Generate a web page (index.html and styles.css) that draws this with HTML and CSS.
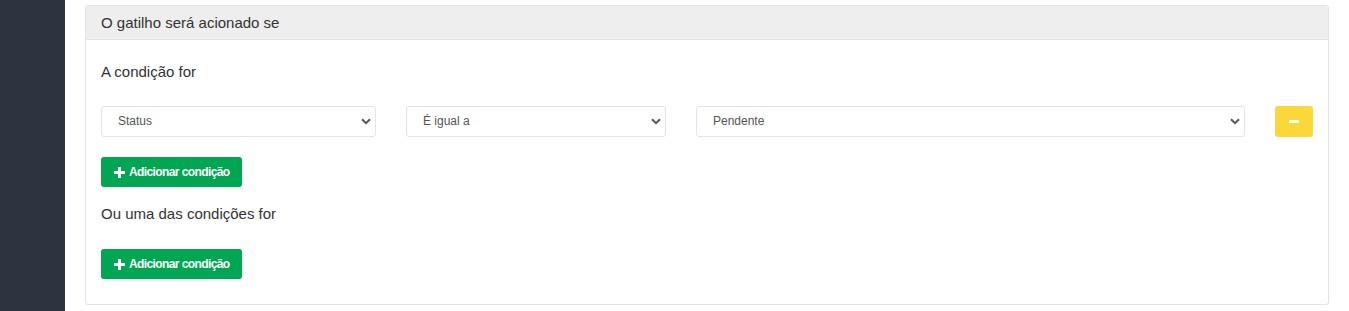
FILE: index.html
```html
<!DOCTYPE html>
<html lang="pt-BR">
<head>
<meta charset="utf-8">
<title>Gatilho</title>
<link rel="stylesheet" href="styles.css">
</head>
<body>
<div class="layout">
  <aside class="sidebar"></aside>
  <main class="main">
    <section class="card">
      <div class="card-header">O gatilho será acionado se</div>
      <div class="card-body">
        <div class="label label-first">A condição for</div>
        <div class="cond-row">
          <div class="select-wrap">
            <select class="select"><option>Status</option></select>
            <svg class="chev" width="10" height="7" viewBox="0 0 10 7"><path d="M1 1.2 L5 5.2 L9 1.2" fill="none" stroke="#555" stroke-width="2"/></svg>
          </div>
          <div class="select-wrap">
            <select class="select"><option>É igual a</option></select>
            <svg class="chev" width="10" height="7" viewBox="0 0 10 7"><path d="M1 1.2 L5 5.2 L9 1.2" fill="none" stroke="#555" stroke-width="2"/></svg>
          </div>
          <div class="select-wrap">
            <select class="select"><option>Pendente</option></select>
            <svg class="chev" width="10" height="7" viewBox="0 0 10 7"><path d="M1 1.2 L5 5.2 L9 1.2" fill="none" stroke="#555" stroke-width="2"/></svg>
          </div>
          <button class="btn-remove" type="button" aria-label="Remover"><span class="minus"></span></button>
        </div>
        <button class="btn-add btn-add-first" type="button">
          <svg class="plus" width="11" height="11" viewBox="0 0 11 11"><path d="M4 0h3v4h4v3H7v4H4V7H0V4h4z" fill="#fff"/></svg>
          <span>Adicionar condição</span>
        </button>
        <div class="label label-second">Ou uma das condições for</div>
        <button class="btn-add btn-add-second" type="button">
          <svg class="plus" width="11" height="11" viewBox="0 0 11 11"><path d="M4 0h3v4h4v3H7v4H4V7H0V4h4z" fill="#fff"/></svg>
          <span>Adicionar condição</span>
        </button>
      </div>
    </section>
  </main>
</div>
</body>
</html>
```
FILE: styles.css
```css
* { box-sizing: border-box; }
html, body { margin: 0; padding: 0; background: #fff; }
body {
  font-family: "Liberation Sans", Arial, sans-serif;
  font-size: 15px;
  color: #333;
}
.layout { display: flex; height: 311px; overflow: hidden; }
.sidebar { width: 65px; flex: none; background: #2d3440; }
.main { flex: 1; padding: 5px 21px 0 20px; }
.card {
  border: 1px solid #e3e3e3;
  border-radius: 3px;
  background: #fff;
}
.card-header {
  background: #eeeeee;
  border-bottom: 1px solid #e3e3e3;
  padding: 7px 15px 6px;
  line-height: 20px;
  border-radius: 3px 3px 0 0;
}
.card-body { padding: 22px 15px 25px; }
.label { line-height: 20px; }
.label-second { margin-top: 17px; }
.cond-row {
  margin-top: 24px;
  display: grid;
  grid-template-columns: 275px 260px 549px 38px;
  column-gap: 30px;
}
.select-wrap { position: relative; height: 31px; }
.select {
  -webkit-appearance: none;
  appearance: none;
  width: 100%;
  height: 31px;
  border: 1px solid #e4e4e4;
  border-radius: 3px;
  background: #fff;
  font-family: "Liberation Sans", Arial, sans-serif;
  font-size: 12px;
  color: #555;
  padding: 0 24px 1px 16px;
  outline: none;
}
.chev { position: absolute; right: 5px; top: 12px; pointer-events: none; }
.btn-remove {
  width: 38px;
  height: 31px;
  border: none;
  border-radius: 3px;
  background: #fbd83a;
  display: flex;
  align-items: center;
  justify-content: center;
  padding: 0;
}
.minus { display: block; width: 10px; height: 3px; background: #fff; }
.btn-add {
  display: flex;
  align-items: center;
  gap: 4px;
  height: 30px;
  padding: 0 12px 0 13px;
  border: none;
  border-radius: 3px;
  background: #00a651;
  color: #fff;
  font-family: "Liberation Sans", Arial, sans-serif;
  font-size: 12px;
  font-weight: bold;
  letter-spacing: -0.6px;
}
.btn-add-first { margin-top: 20px; }
.btn-add-second { margin-top: 25px; }
.plus { flex: none; }
```
